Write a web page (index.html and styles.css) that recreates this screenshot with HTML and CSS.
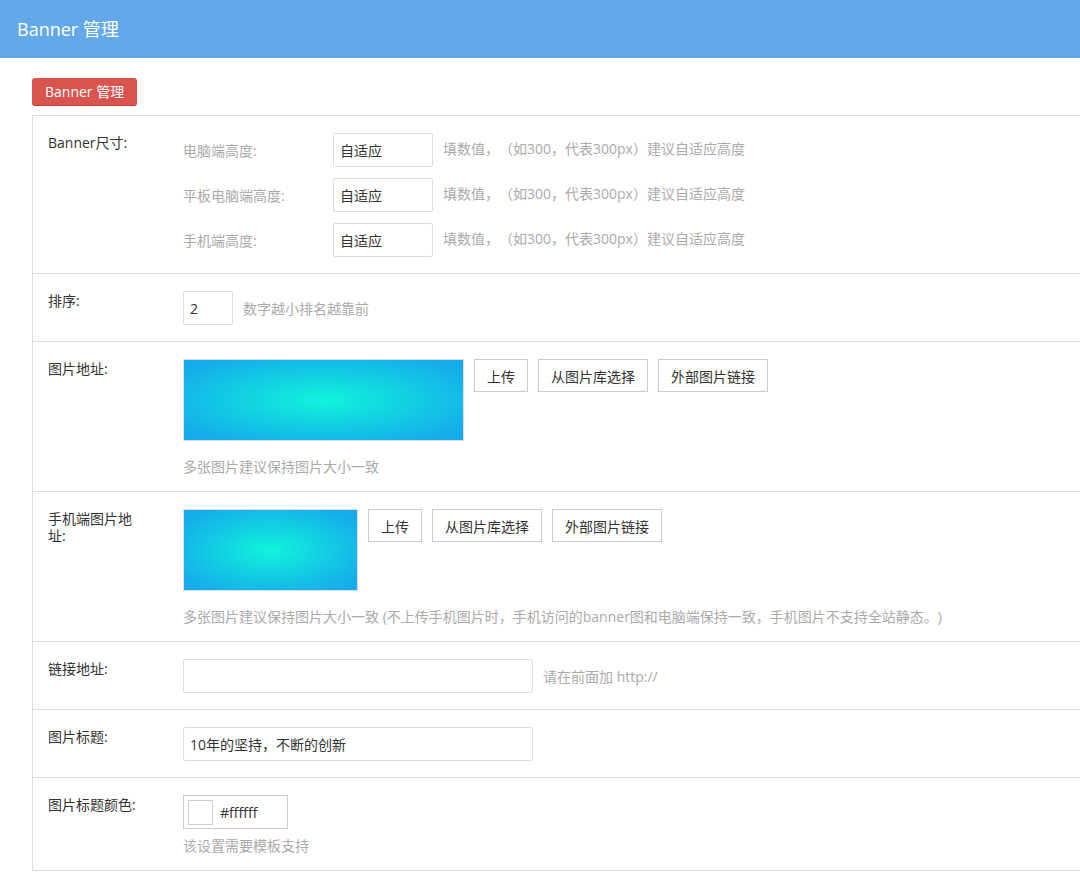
FILE: index.html
```html
<!DOCTYPE html>
<html lang="zh-CN">
<head>
<meta charset="utf-8">
<title>Banner 管理</title>
<link rel="stylesheet" href="styles.css">
</head>
<body>
<header class="topbar">Banner 管理</header>
<main class="content">
  <div class="tab">Banner 管理</div>
  <div class="form">
    <div class="row">
      <div class="label">Banner尺寸:</div>
      <div class="field">
        <div class="size-list">
          <div class="size-line">
            <span class="sublabel">电脑端高度:</span>
            <input class="input w100" type="text" value="自适应">
            <span class="hint">填数值，（如300，代表300px）建议自适应高度</span>
          </div>
          <div class="size-line">
            <span class="sublabel">平板电脑端高度:</span>
            <input class="input w100" type="text" value="自适应">
            <span class="hint">填数值，（如300，代表300px）建议自适应高度</span>
          </div>
          <div class="size-line">
            <span class="sublabel">手机端高度:</span>
            <input class="input w100" type="text" value="自适应">
            <span class="hint">填数值，（如300，代表300px）建议自适应高度</span>
          </div>
        </div>
      </div>
    </div>

    <div class="row">
      <div class="label">排序:</div>
      <div class="field inline">
        <input class="input w50" type="text" value="2">
        <span class="hint">数字越小排名越靠前</span>
      </div>
    </div>

    <div class="row">
      <div class="label">图片地址:</div>
      <div class="field">
        <div class="pic-line">
          <div class="pic pic-wide"></div>
          <button class="btn w54">上传</button>
          <button class="btn w110">从图片库选择</button>
          <button class="btn w110">外部图片链接</button>
        </div>
        <div class="hint block">多张图片建议保持图片大小一致</div>
      </div>
    </div>

    <div class="row">
      <div class="label">手机端图片地址:</div>
      <div class="field">
        <div class="pic-line">
          <div class="pic pic-narrow"></div>
          <button class="btn w54">上传</button>
          <button class="btn w110">从图片库选择</button>
          <button class="btn w110">外部图片链接</button>
        </div>
        <div class="hint block">多张图片建议保持图片大小一致 (不上传手机图片时，手机访问的banner图和电脑端保持一致，手机图片不支持全站静态。)</div>
      </div>
    </div>

    <div class="row">
      <div class="label">链接地址:</div>
      <div class="field inline">
        <input class="input w350" type="text" value="">
        <span class="hint">请在前面加 http://</span>
      </div>
    </div>

    <div class="row">
      <div class="label">图片标题:</div>
      <div class="field inline">
        <input class="input w350" type="text" value="10年的坚持，不断的创新">
      </div>
    </div>

    <div class="row">
      <div class="label">图片标题颜色:</div>
      <div class="field">
        <div class="color-box">
          <span class="swatch"></span>
          <span class="color-val">#ffffff</span>
        </div>
        <div class="hint block small-gap">该设置需要模板支持</div>
      </div>
    </div>
  </div>
</main>
</body>
</html>
```

FILE: styles.css
```css
* { box-sizing: border-box; }

html, body {
  margin: 0;
  padding: 0;
  background: #fff;
  overflow: hidden;
}

body {
  font-family: "Open Sans", "Noto Sans CJK SC", sans-serif;
  font-size: 14px;
  color: #333;
  text-spacing-trim: space-all;
}

.topbar {
  height: 58px;
  background: #63a8e9;
  color: #fff;
  font-size: 18px;
  line-height: 58px;
  padding-left: 17px;
}

.content {
  padding: 20px 0 0 32px;
}

.tab {
  display: inline-block;
  height: 28px;
  line-height: 27px;
  padding: 0 13px;
  background: #d9534f;
  color: #fff;
  font-size: 14px;
  border-radius: 3px;
  border-bottom: 1px solid #c9403b;
  margin-bottom: 9px;
}

.form {
  border: 1px solid #dddddd;
  border-right: none;
  border-bottom: none;
  width: calc(100% + 20px);
}

.row {
  display: flex;
  border-bottom: 1px solid #dddddd;
  padding: 17px 0 16px;
}

.label {
  width: 90px;
  margin-left: 15px;
  margin-right: 45px;
  padding-top: 1px;
  line-height: 17px;
  flex-shrink: 0;
}

.field {
  flex: 1;
}

.field.inline {
  display: flex;
  align-items: center;
}

.size-list {
  display: flex;
  flex-direction: column;
  gap: 11px;
}

.size-line {
  display: flex;
  align-items: center;
}

.sublabel {
  width: 150px;
  color: #aaa;
}

.input {
  height: 34px;
  border: 1px solid #dddddd;
  border-radius: 2px;
  padding: 0 6px;
  font-family: inherit;
  font-size: 14px;
  color: #333;
  background: #fff;
  outline: none;
}

.w50 { width: 50px; }
.w100 { width: 100px; }
.w350 { width: 350px; }

.hint {
  color: #aaa;
  margin-left: 10px;
  line-height: 17px;
  white-space: nowrap;
}

.size-line .hint {
  margin-top: -4px;
}

.hint.block {
  display: block;
  margin-left: 0;
  margin-top: 17px;
}

.hint.block.small-gap {
  margin-top: 8px;
}

.pic-line {
  display: flex;
  align-items: flex-start;
  gap: 10px;
}

.pic {
  height: 82px;
  border: 1px solid #dddddd;
  background: radial-gradient(ellipse at center, #10f4da 0%, #12d2e2 40%, #15aeea 85%, #16a8ec 100%);
}

.pic-wide { width: 281px; }
.pic-narrow { width: 175px; }

.btn {
  height: 33px;
  border: 1px solid #cccccc;
  background: #fff;
  color: #333;
  font-family: inherit;
  font-size: 14px;
  padding: 0;
  border-radius: 0;
}

.w54 { width: 54px; }
.w110 { width: 110px; }

.color-box {
  display: flex;
  align-items: center;
  width: 105px;
  height: 34px;
  border: 1px solid #cccccc;
  padding-left: 4px;
}

.swatch {
  width: 25px;
  height: 25px;
  border: 1px solid #cccccc;
  background: #fff;
}

.color-val {
  margin-left: 7px;
}
```
